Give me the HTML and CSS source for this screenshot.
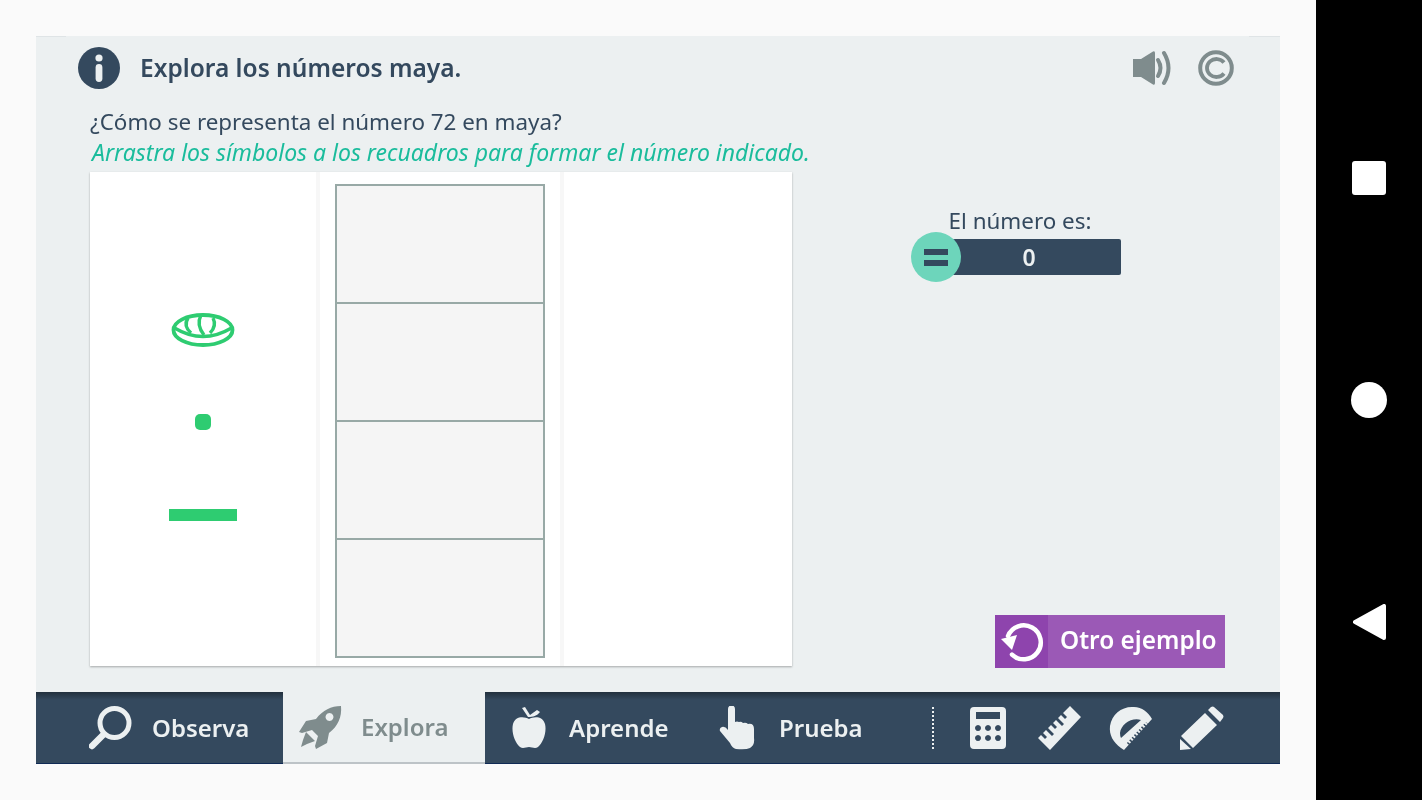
FILE: index.html
```html
<!DOCTYPE html>
<html lang="es">
<head>
<meta charset="utf-8">
<title>Explora los números maya</title>
<link rel="stylesheet" href="styles.css">
</head>
<body>
<main class="screen">
  <div class="app">
    <header class="head">
      <svg class="info" viewBox="0 0 42 42"><circle cx="21" cy="21" r="21" fill="#34495e"/><circle cx="21" cy="11" r="3.6" fill="#ecf0f1"/><rect x="17.6" y="17" width="6.8" height="18" rx="3.4" fill="#ecf0f1"/></svg>
      <h1 class="title">Explora los números maya.</h1>
      <svg class="speaker" viewBox="0 0 38 36"><path d="M0 9h8L20 1.500q2-1 2 1.500v30q0 2.500-2 1.500L8 27H0z" fill="#7f8c8d"/><path d="M25 10q5 8 0 16" fill="none" stroke="#7f8c8d" stroke-width="4" stroke-linecap="round"/><path d="M31 3q9 15 0 30" fill="none" stroke="#7f8c8d" stroke-width="4" stroke-linecap="round"/></svg>
      <svg class="copy" viewBox="0 0 36 36"><circle cx="18" cy="18" r="15.800" fill="none" stroke="#7f8c8d" stroke-width="4"/><path d="M26 12.500a9.500 9 0 1 0 0 11" fill="none" stroke="#7f8c8d" stroke-width="3.800"/></svg>
    </header>
    <div class="prompt">
      <p class="question">¿Cómo se representa el número 72 en maya?</p>
      <p class="hint">Arrastra los símbolos a los recuadros para formar el número indicado.</p>
    </div>
    <section class="work">
      <div class="board">
        <div class="symbols">
          <svg class="shell" viewBox="0 0 64 36"><ellipse cx="32" cy="18" rx="29.500" ry="15" fill="none" stroke="#2ecc71" stroke-width="3.800"/><path d="M3.500 16Q32 33 60.500 16" fill="none" stroke="#2ecc71" stroke-width="3.400"/><path d="M17 6Q12 14 20 21M30 3Q25 13 33 23M42 6Q46 14 39 21" fill="none" stroke="#2ecc71" stroke-width="3.400"/></svg>
          <span class="dot"></span>
          <span class="bar"></span>
        </div>
        <div class="slots">
          <div class="slot"></div>
          <div class="slot"></div>
          <div class="slot"></div>
          <div class="slot"></div>
        </div>
        <div class="blank"></div>
      </div>
      <aside class="side">
        <div class="result">
          <div class="result-label">El número es:</div>
          <div class="result-row">
            <span class="equals"><i></i><i></i></span>
            <span class="value">0</span>
          </div>
        </div>
        <button class="again" type="button">
          <span class="again-icon"><svg viewBox="0 0 46 44"><path d="M9 16A17 17 0 1 1 13 34.600" fill="none" stroke="#fff" stroke-width="4.500" stroke-linecap="round"/><path d="M2 19L18 15L13 30z" fill="#fff"/></svg></span>
          <span class="again-text">Otro ejemplo</span>
        </button>
      </aside>
    </section>
    <nav class="tabs">
      <a class="tab tab-observa">
        <svg class="ico" viewBox="0 0 44 44"><circle cx="25.500" cy="17" r="14.500" fill="none" stroke="#ecf0f1" stroke-width="5"/><path d="M14 29L3 40" stroke="#ecf0f1" stroke-width="6.500" stroke-linecap="round"/></svg>
        <span class="tab-text">Observa</span>
      </a>
      <a class="tab tab-explora active">
        <svg class="ico" viewBox="0 0 44 44"><path fill-rule="evenodd" d="M43 1c1 11-3 20-12 27l-2 10-11 6-1-3 3-10-6-6-10 3-3-1 7-11 10-2C25 5 33 1 43 1zM31.500 8a4 4 0 1 0 .01 0z" fill="#7f8c8d"/><path d="M8 27l9 9-8 3-6 3 2-7z" fill="#7f8c8d"/></svg>
        <span class="tab-text">Explora</span>
      </a>
      <a class="tab tab-aprende">
        <svg class="ico" viewBox="0 0 34 42"><path d="M17 12C12 9 3 9 1 17C-1 25 3 36 8 40C11 42 14 40 17 40C20 40 23 42 26 40C31 36 35 25 33 17C31 9 22 9 17 12zM16 10L10 1L13 0L18 8L25 3L28 5C25 9 21 10 16 10z" fill="#ecf0f1"/></svg>
        <span class="tab-text">Aprende</span>
      </a>
      <a class="tab tab-prueba">
        <svg class="ico" viewBox="0 0 38 44"><path d="M9 3a3.500 3.500 0 0 1 7 0v13q2-1 4 0 2-1 4 1 3-1 5 1 6-1 6 5v9q1 7-4 10-4 2-14 1-4-1-6-6L1 25q-1-3 2-4 3-1 6 3z" fill="#ecf0f1"/></svg>
        <span class="tab-text">Prueba</span>
      </a>
      <span class="sep"></span>
      <a class="tool tool-calc">
        <svg class="tool-ico" viewBox="0 0 36 42"><path fill-rule="evenodd" d="M4 0h28a4 4 0 0 1 4 4v34a4 4 0 0 1-4 4H4a4 4 0 0 1-4-4V4a4 4 0 0 1 4-4zM6 5v7h24V5zM8 18a3 3 0 1 0 .01 0zM18 18a3 3 0 1 0 .01 0zM28 18a3 3 0 1 0 .01 0zM8 28a3 3 0 1 0 .01 0zM18 28a3 3 0 1 0 .01 0zM28 28a3 3 0 1 0 .01 0z" fill="#ecf0f1"/></svg>
      </a>
      <a class="tool tool-ruler">
        <svg class="tool-ico" viewBox="0 0 44 44"><path d="M33 0l11 11-31 33L1 32l3-3 4 4 2-2-4-4 3-3 6 6 2-2-6-6 3-3 4 4 2-2-4-4 3-3 6 6 2-2-6-6 3-3 4 4 2-2-4-4z" fill="#ecf0f1"/></svg>
      </a>
      <a class="tool tool-prot">
        <svg class="tool-ico" viewBox="0 0 44 44"><path fill-rule="evenodd" d="M43 13L15 44l-3-2C4 36 0 29 1 20 3 8 13 0 25 1c8 0 14 5 18 12zM32 14C23 11 12 18 11 27q0 3 1 5z" fill="#ecf0f1"/><path d="M19 38L38 17" fill="none" stroke="#34495e" stroke-width="3" stroke-dasharray="1.500 2"/></svg>
      </a>
      <a class="tool tool-pencil">
        <svg class="tool-ico" viewBox="0 0 44 44"><path d="M34 1l9 8q1 2 0 3l-3 4-12-12 3-3q2-1 3 0zM25 7l12 12L13 42 1 30zM0 33l11 10-11 1z" fill="#ecf0f1"/></svg>
      </a>
    </nav>
  </div>
</main>
<aside class="sysbar">
  <span class="sys-square"></span>
  <span class="sys-circle"></span>
  <svg class="sys-back" viewBox="0 0 33 36"><path d="M31 2v32L2 18z" fill="#fff" stroke="#fff" stroke-width="4" stroke-linejoin="round"/></svg>
</aside>
</body>
</html>
```
FILE: styles.css
```css
* { box-sizing: border-box; }
html, body { margin: 0; height: 100%; }
body {
  display: flex;
  width: 1422px;
  height: 800px;
  overflow: hidden;
  background: #fafafa;
  font-family: "Noto Sans", "Open Sans", sans-serif;
  color: #34495e;
}
.screen { width: 1316px; padding: 36px; }
.app {
  display: flex;
  flex-direction: column;
  width: 1244px;
  height: 728px;
  background:
    linear-gradient(#dfe4e6, #dfe4e6) 0 0 / 30px 1px no-repeat,
    linear-gradient(#dfe4e6, #dfe4e6) 100% 0 / 31px 1px no-repeat,
    #ecf0f1;
  filter: blur(.35px);
}
.head {
  display: flex;
  align-items: center;
  height: 64px;
  padding: 0 46px 0 42px;
}
.info { width: 42px; height: 42px; flex: none; }
.title { margin: 0 0 2px 20px; font-size: 24.5px; font-weight: 600; flex: 1; }
.speaker { width: 38px; height: 36px; flex: none; }
.copy { width: 36px; height: 36px; flex: none; margin-left: 27px; }
.prompt { padding: 7px 0 0 54px; height: 72px; }
.question { margin: 0; font-size: 22.4px; line-height: 30px; }
.hint { margin: 0 0 0 2px; font-size: 23px; line-height: 30px; font-style: italic; color: #1abc9c; }
.work { display: flex; height: 520px; padding-left: 54px; }
.board {
  display: flex;
  width: 702px;
  height: 494px;
  gap: 4px;
  background: #f7f7f7;
  box-shadow: 0 1px 2px rgba(0, 0, 0, .3);
}
.symbols {
  display: flex;
  flex-direction: column;
  align-items: center;
  width: 226px;
  padding-top: 140px;
  background: #fff;
}
.shell { width: 64px; height: 36px; }
.dot { width: 16px; height: 16px; margin-top: 66px; border-radius: 5px; background: #2ecc71; }
.bar { width: 68px; height: 12px; margin-top: 79px; background: #2ecc71; }
.slots { width: 240px; padding: 12px 15px 0; background: #fff; }
.slot {
  width: 210px;
  height: 120px;
  margin-bottom: -2px;
  background: #f5f5f5;
  border: 2px solid #98a9a6;
}
.blank { flex: 1; background: #fff; }
.side {
  flex: 1;
  display: flex;
  flex-direction: column;
  align-items: flex-start;
  padding: 34px 0 0 119px;
}
.result { width: 210px; }
.result-label { padding: 4px 0 0 8px; font-size: 22.4px; line-height: 22px; text-align: center; }
.result-row { display: flex; align-items: center; }
.equals {
  position: relative;
  z-index: 1;
  display: flex;
  flex-direction: column;
  justify-content: center;
  gap: 5px;
  width: 50px;
  height: 50px;
  padding: 0 13px;
  border-radius: 50%;
  background: #6dd5bb;
}
.equals i { display: block; height: 6px; background: #34495e; }
.value {
  width: 171px;
  height: 36px;
  margin-left: -11px;
  padding-right: 13px;
  border-radius: 2px;
  background: #34495e;
  color: #ecf0f1;
  font-size: 23px;
  font-weight: 600;
  line-height: 36px;
  text-align: center;
}
.again {
  display: flex;
  align-items: stretch;
  width: 230px;
  height: 53px;
  margin: 333px 0 0 84px;
  padding: 0;
  border: 0;
  background: #9b59b6;
  font-family: inherit;
  color: #fff;
}
.again-icon { display: flex; align-items: center; justify-content: center; width: 53px; background: #8e44ad; }
.again-icon svg { width: 46px; height: 44px; }
.again-text { padding-left: 12px; font-size: 24.4px; font-weight: 600; line-height: 50px; }
.tabs {
  display: flex;
  align-items: center;
  height: 72px;
  background: linear-gradient(#22303d 0, #34495e 8px);
  box-shadow: inset 0 -1px #102a55;
}
.tab {
  display: flex;
  align-items: center;
  gap: 20px;
  height: 72px;
  font-size: 24px;
  font-weight: 600;
  color: #ecf0f1;
}
.tab-text { margin-bottom: 2px; }
.ico { width: 44px; height: 44px; flex: none; }
.tab-observa { width: 247px; padding-left: 53px; gap: 19px; }
.tab-explora { width: 202px; padding-left: 15px; gap: 19px; }
.active { background: #ecf0f1; color: #7f8c8d; border-bottom: 2px solid #bdc3c7; }
.tab-aprende { width: 208px; padding-left: 27px; gap: 23px; }
.tab-aprende .ico { width: 34px; height: 42px; }
.tab-prueba { width: 239px; padding-left: 26px; gap: 22px; }
.tab-prueba .ico { width: 38px; }
.sep { height: 42px; border-left: 2px dotted #ecf0f1; }
.tool { display: flex; align-items: center; }
.tool-ico { width: 44px; height: 44px; display: block; }
.tool-calc { margin-left: 36px; }
.tool-calc .tool-ico { width: 36px; height: 42px; }
.tool-ruler { margin-left: 31px; }
.tool-prot { margin-left: 28px; }
.tool-pencil { margin-left: 27px; }
.sysbar {
  display: flex;
  flex-direction: column;
  align-items: center;
  justify-content: space-between;
  width: 106px;
  height: 800px;
  padding: 161px 0 160px;
  background: #000;
}
.sys-square { width: 34px; height: 34px; border-radius: 3px; background: #fff; }
.sys-circle { width: 36px; height: 36px; border-radius: 50%; background: #fff; }
.sys-back { width: 33px; height: 36px; }
```
